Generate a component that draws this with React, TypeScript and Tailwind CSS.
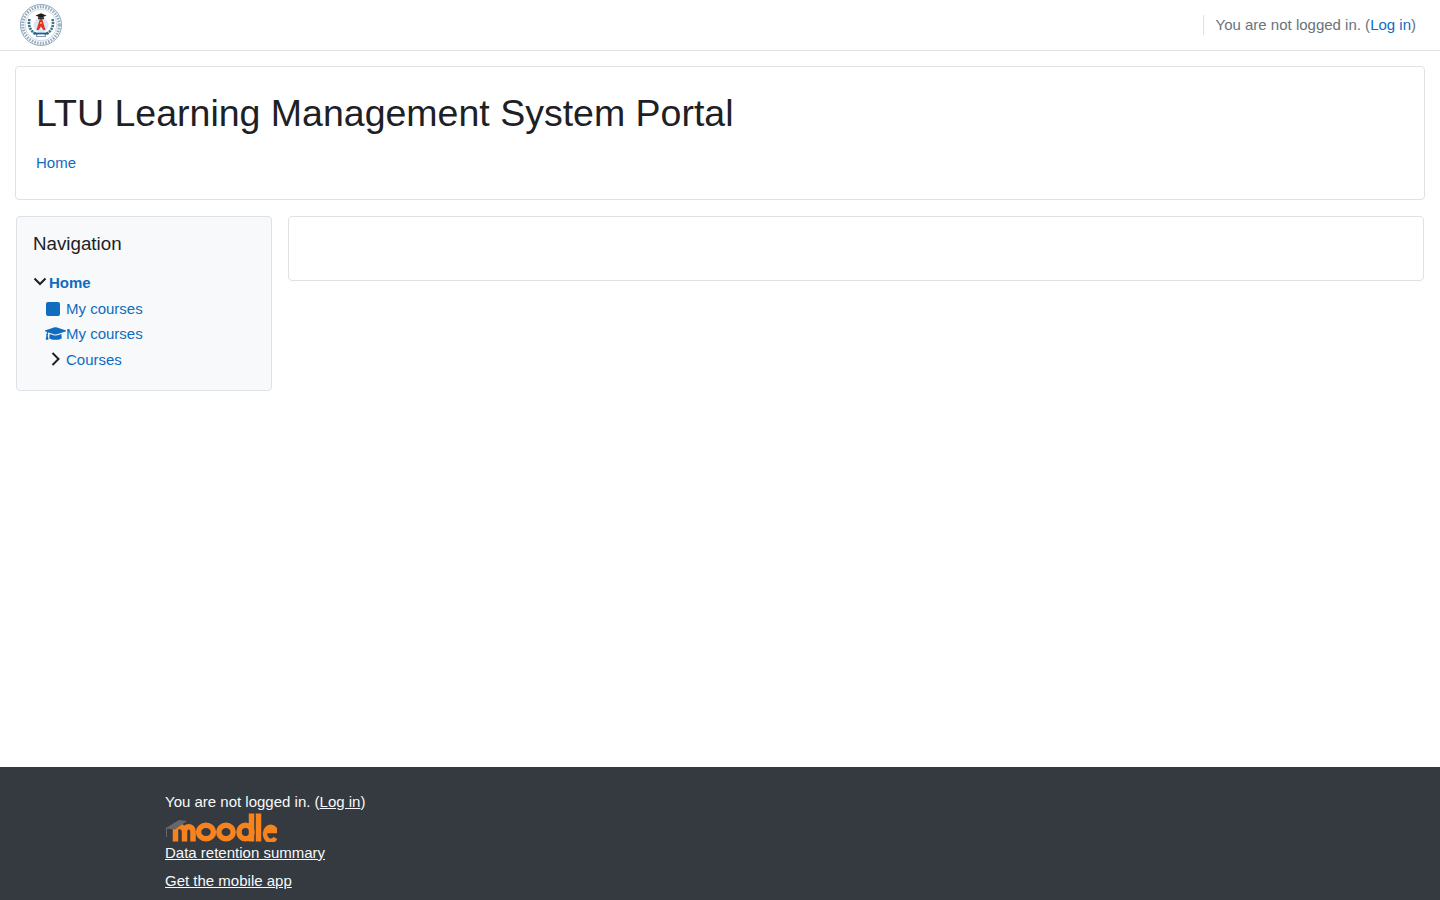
import { FaGraduationCap } from "react-icons/fa";

const Logo = () => (
  <svg width="42" height="42" viewBox="0 0 42 42">
    <circle cx="21" cy="21" r="20.5" fill="#fff" stroke="#6f93b3" strokeWidth="0.8" />
    <circle cx="21" cy="21" r="18.2" fill="none" stroke="#5f7f9e" strokeWidth="3" strokeDasharray="1.6 1.2" opacity="0.65" />
    <circle cx="21" cy="21" r="15.8" fill="#fff" stroke="#9db4c9" strokeWidth="0.5" />
    <path d="M9.5 15c-2 7 1.5 13.5 8 15.5" fill="none" stroke="#3c7488" strokeWidth="2.6" strokeDasharray="2.2 0.8" />
    <path d="M32.5 15c2 7-1.5 13.5-8 15.5" fill="none" stroke="#3c7488" strokeWidth="2.6" strokeDasharray="2.2 0.8" />
    <circle cx="21" cy="21" r="7.5" fill="#dbe7f3" />
    <path d="M15.5 11.5l5.5-2.3 5.5 2.3-5.5 2.4z" fill="#1f1f1f" />
    <path d="M18 13.2h6v2h-6z" fill="#333" />
    <path d="M19.8 15h2.4l3.3 11h-2.2L21 22.5 18.7 26h-2.2z" fill="#e2332b" />
    <path d="M13.5 29.5h15" stroke="#2a5d8f" strokeWidth="1.8" />
    <path d="M16 32.5h10" stroke="#7d9cb8" strokeWidth="1" />
    <circle cx="21" cy="19" r="1" fill="#f6d04d" />
  </svg>
);

const MoodleLogo = () => (
  <svg width="112" height="30" viewBox="0 0 112 30">
    <g fill="none" stroke="#f7831f" strokeWidth="5.5">
      <path d="M10.5 29.5V14.500h4a5 5 0 0 1 5 5v10" />
      <path d="M19.5 19a4.200 4.200 0 0 1 8.500 0v10.500" />
      <ellipse cx="41" cy="20" rx="7.500" ry="6.800" />
      <ellipse cx="61" cy="20" rx="7.200" ry="6.800" />
      <ellipse cx="80.500" cy="20" rx="6.500" ry="6.800" />
      <path d="M86.500 1.500v28" />
      <path d="M93.500 1.500v28" />
      <path d="M110.500 26a5.800 7 0 1 1 0.600-7H99.500" strokeWidth="4.500" />
    </g>
    <path d="M0 16.500L14 8l8 1-12 8.500z" fill="#666769" />
    <path d="M1.500 16v9" stroke="#666769" strokeWidth="1" />
  </svg>
);

const ChevronDown = () => (
  <svg width="16" height="16" viewBox="0 0 16 16" fill="none" stroke="#1d2125" strokeWidth="2" className="shrink-0 -mt-px">
    <path d="M1.5 3.500l5.500 5.500 5.500-5.500" />
  </svg>
);

const ChevronRight = () => (
  <svg width="16" height="16" viewBox="0 0 16 16" fill="none" stroke="#1d2125" strokeWidth="2" className="shrink-0 -mt-[2px]">
    <path d="M4.5 2l6 6-6 6" />
  </svg>
);

export default function App() {
  return (
    <div className="min-h-[900px] flex flex-col bg-white text-[15px] leading-[22.5px] text-[#1d2125] font-['Arial','Liberation_Sans',sans-serif]">
      {/* Top bar */}
      <header className="h-[51px] border-b border-[#dee2e6] pl-5 pr-6 flex items-center justify-between">
        <Logo />
        <div className="flex items-center">
          <div className="h-5 border-l border-[#dee2e6] mr-3" />
          <span className="text-[#6a737b]">
            You are not logged in. (<a className="text-[#0f6cbf]">Log in</a>)
          </span>
        </div>
      </header>

      {/* Page heading */}
      <div className="mx-[15px] mt-[15px] h-[134px] rounded border border-[#dee2e6] px-5 pt-5">
        <h1 className="text-[37.5px] leading-[45px] mt-1">LTU Learning Management System Portal</h1>
        <div className="mt-4">
          <a className="text-[#0f6cbf]">Home</a>
        </div>
      </div>

      {/* Main */}
      <div className="flex-1 flex items-start gap-4 pl-4 pr-4 pt-4">
        <aside className="w-[256px] h-[175px] bg-[#f8f9fa] border border-[#dee2e6] rounded px-4 pt-4">
          <h5 className="text-[18.75px] leading-[22.5px]">Navigation</h5>
          <ul className="mt-[15px] text-[#0f6cbf]">
            <li className="flex items-center h-[26px]">
              <ChevronDown />
              <a className="font-bold">Home</a>
            </li>
            <li className="flex items-center h-[25px] ml-[13px]">
              <span className="w-[14px] h-[14px] rounded-[2px] bg-[#0f6cbf] -mt-px" />
              <a className="ml-[6px]">My courses</a>
            </li>
            <li className="flex items-center h-[26px] ml-[12px]">
              <FaGraduationCap size={21} className="shrink-0 -mt-[2px]" />
              <a>My courses</a>
            </li>
            <li className="flex items-center h-[25px] ml-[15px]">
              <ChevronRight />
              <a className="ml-[2px]">Courses</a>
            </li>
          </ul>
        </aside>
        <main className="flex-1 h-[65px] border border-[#dee2e6] rounded" />
      </div>

      {/* Footer */}
      <footer className="h-[133px] bg-[#343a40] text-[#f8f9fa] pl-[165px] pt-6 overflow-hidden">
        <div>
          You are not logged in. (<a className="underline">Log in</a>)
        </div>
        <div className="-mt-[2px] h-[30px]">
          <MoodleLogo />
        </div>
        <div>
          <a className="underline">Data retention summary</a>
        </div>
        <div className="mt-[6px]">
          <a className="underline">Get the mobile app</a>
        </div>
      </footer>
    </div>
  );
}
